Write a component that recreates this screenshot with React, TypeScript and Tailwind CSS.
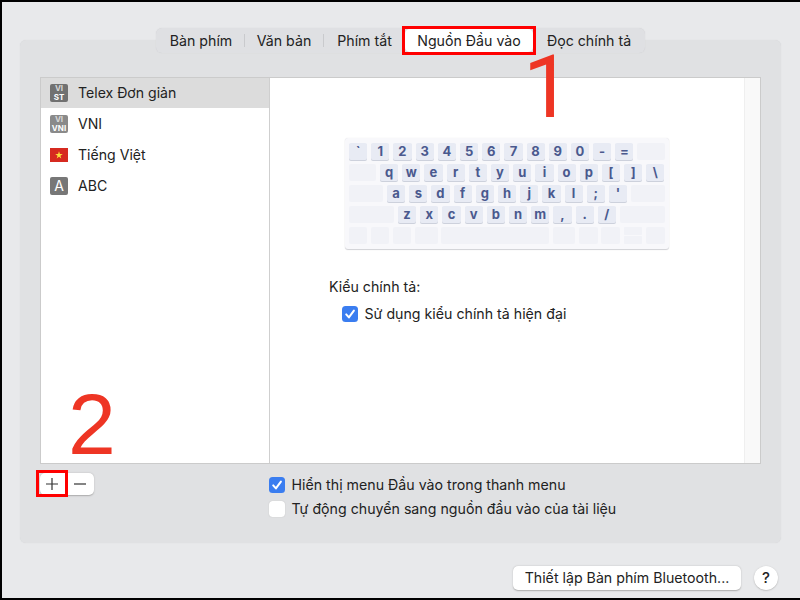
const row1 = ["`", "1", "2", "3", "4", "5", "6", "7", "8", "9", "0", "-", "="];
const row2 = ["q", "w", "e", "r", "t", "y", "u", "i", "o", "p", "[", "]", "\\"];
const row3 = ["a", "s", "d", "f", "g", "h", "j", "k", "l", ";", "'"];
const row4 = ["z", "x", "c", "v", "b", "n", "m", ",", ".", "/"];

function Key({ label }: { label: string }) {
  return (
    <div className="flex h-[17.5px] w-[18.2px] shrink-0 items-center justify-center rounded-[2px] bg-[#e8ebf4] text-[13px] font-bold leading-none text-[#4a598e] shadow-[0_1px_0_#cdd1dc]">
      {label}
    </div>
  );
}

function Blank({ className }: { className: string }) {
  return <div className={`h-[17.5px] rounded-[2px] bg-[#f1f2f7] ${className}`} />;
}

function Keyboard() {
  return (
    <div className="ml-[75px] mt-[60px] flex h-[111px] w-[324px] flex-col gap-[3.6px] rounded-[3px] bg-[#f8f8fb] px-[4px] pt-[4.5px] shadow-[0_1px_1px_#d0d1d5,0_0_1px_#d9dade]">
      <div className="flex gap-[4px]">
        {row1.map((k) => (
          <Key key={k} label={k} />
        ))}
        <Blank className="flex-1" />
      </div>
      <div className="flex gap-[4px]">
        <Blank className="w-[27px]" />
        {row2.map((k) => (
          <Key key={k} label={k} />
        ))}
      </div>
      <div className="flex gap-[4px]">
        <Blank className="w-[34px]" />
        {row3.map((k) => (
          <Key key={k} label={k} />
        ))}
        <Blank className="flex-1" />
      </div>
      <div className="flex gap-[4px]">
        <Blank className="w-[45px]" />
        {row4.map((k) => (
          <Key key={k} label={k} />
        ))}
        <Blank className="flex-1" />
      </div>
      <div className="flex gap-[3.5px]">
        <Blank className="w-[18px]" />
        <Blank className="w-[18.5px]" />
        <Blank className="w-[18.5px]" />
        <Blank className="w-[23px]" />
        <Blank className="w-[108px]" />
        <Blank className="w-[22.5px]" />
        <Blank className="w-[19px]" />
        <Blank className="w-[19px]" />
        <div className="flex w-[18.5px] flex-col gap-[1px]">
          <div className="h-[8px] rounded-[1px] bg-[#f1f2f7]" />
          <div className="h-[8px] rounded-[1px] bg-[#f1f2f7]" />
        </div>
        <Blank className="flex-1" />
      </div>
    </div>
  );
}

function Checkbox({ checked }: { checked?: boolean }) {
  if (!checked) {
    return <div className="h-[15.5px] w-[15.5px] shrink-0 rounded-[3.5px] bg-white shadow-[0_0_1px_#a9a9a9]" />;
  }
  return (
    <div className="flex h-[15.5px] w-[15.5px] shrink-0 items-center justify-center rounded-[3.5px] bg-[#3a7df0]">
      <svg width="12" height="12" viewBox="0 0 12 12" fill="none">
        <path d="M2.2 6.4 4.9 9.4 9.9 2.6" stroke="white" strokeWidth="2" strokeLinecap="round" strokeLinejoin="round" />
      </svg>
    </div>
  );
}

function Badge({ top, bottom, tone }: { top: string; bottom: string; tone: string }) {
  return (
    <div className={`flex h-[18px] w-[18px] flex-col items-center justify-center overflow-hidden rounded-[2px] text-[8px] font-bold leading-[9px] text-white ${tone}`}>
      <span className="text-[#d8d8d8]">{top}</span>
      <span>{bottom}</span>
    </div>
  );
}

function ListRow({ icon, label, selected }: { icon: React.ReactNode; label: string; selected?: boolean }) {
  return (
    <div className={`flex items-center pl-[9px] ${selected ? "h-[30px] bg-[#dcdcdc]" : "h-[31px]"}`}>
      <div className="flex w-[28px] shrink-0 items-center">{icon}</div>
      <span className="text-[14.1px] text-[#222]">{label}</span>
    </div>
  );
}

function Flag() {
  return (
    <svg width="18" height="14" viewBox="0 0 18 14">
      <rect width="18" height="14" fill="#d62a20" />
      <path d="M9 3.2 9.9 6 12.8 6 10.4 7.7 11.3 10.5 9 8.8 6.7 10.5 7.6 7.7 5.2 6 8.1 6Z" fill="#fbe03c" />
    </svg>
  );
}

const tabs = [
  { label: "Bàn phím", width: "w-[89px] pl-[2px]", divider: true },
  { label: "Văn bản", width: "w-[79px]", divider: true },
  { label: "Phím tắt", width: "w-[81px]", divider: false },
];

export default function App() {
  return (
    <div
      className="relative h-[600px] w-[800px] overflow-hidden border-b-2 border-l-2 border-t-2 border-black bg-[#e8e9eb] pl-[18px] pr-[19px] pt-[26px] text-[#222]"
      style={{ fontFamily: "Inter, 'Liberation Sans', sans-serif" }}
    >
      <div className="relative z-10 -mb-[13px] ml-[136px] flex h-[25px] w-[489px] items-center rounded-[6px] bg-[#dfe0e3] text-[14.2px] shadow-[0_0_1px_#c8c9cc]">
        {tabs.map((t) => (
          <div key={t.label} className={`flex h-[13px] items-center justify-center ${t.width} ${t.divider ? "border-r border-[#c9cacd]" : ""}`}>
            {t.label}
          </div>
        ))}
        <div className="flex h-[23px] w-[128px] items-center justify-center rounded-[5px] bg-white">Nguồn Đầu vào</div>
        <div className="flex flex-1 items-center justify-center">Đọc chính tả</div>
      </div>

      <div className="h-[503px] rounded-[6px] bg-[#e0e1e3] px-[20px] pt-[37px] shadow-[0_0_1px_#cfd0d2]">
        <div className="flex h-[387px] w-[721px] border border-[#cbcbcb] bg-white">
          <div className="w-[229px] border-r border-[#cfcfcf]">
            <ListRow selected label="Telex Đơn giản" icon={<Badge top="VI" bottom="ST" tone="bg-[#717171]" />} />
            <ListRow label="VNI" icon={<Badge top="VI" bottom="VNI" tone="bg-[#8a8a8a]" />} />
            <ListRow label="Tiếng Việt" icon={<Flag />} />
            <ListRow
              label="ABC"
              icon={
                <div className="flex h-[18px] w-[18px] items-center justify-center rounded-[2px] bg-[#777] text-[14px] leading-none text-white">
                  A
                </div>
              }
            />
          </div>
          <div className="flex-1">
            <Keyboard />
            <div className="ml-[59px] mt-[28px] h-[20px] text-[14.2px] leading-[20px]">Kiểu chính tả:</div>
            <div className="ml-[72px] mt-[7px] flex h-[20px] items-center gap-[7px] text-[14.2px]">
              <Checkbox checked />
              <span>Sử dụng kiểu chính tả hiện đại</span>
            </div>
          </div>
          <div className="w-[16px] border-l border-[#efefef] bg-[#f9f9f9]" />
        </div>

        <div className="mt-[9px] flex">
          <div className="flex h-[22px] w-[54px] rounded-[5px] bg-white shadow-[0_0.5px_1.5px_#aaa]">
            <div className="flex w-[24px] items-center justify-center">
              <svg width="12" height="12" viewBox="0 0 12 12" stroke="#333" strokeWidth="1.2">
                <path d="M6 0V12M0 6H12" />
              </svg>
            </div>
            <div className="ml-auto flex w-[28px] items-center justify-center">
              <svg width="12" height="12" viewBox="0 0 12 12" stroke="#333" strokeWidth="1.2">
                <path d="M0 6H12" />
              </svg>
            </div>
          </div>
          <div className="ml-[175px] mt-[4px] flex flex-col gap-[8px] text-[14.2px]">
            <div className="flex h-[16px] items-center gap-[7px]">
              <Checkbox checked />
              <span>Hiển thị menu Đầu vào trong thanh menu</span>
            </div>
            <div className="flex h-[16px] items-center gap-[7px]">
              <Checkbox />
              <span>Tự động chuyển sang nguồn đầu vào của tài liệu</span>
            </div>
          </div>
        </div>
      </div>

      <div className="mt-[23px] flex items-center justify-end gap-[13px] pr-[3px]">
        <div className="flex h-[23.5px] w-[228px] items-center justify-center rounded-[5px] bg-white text-[14.2px] shadow-[0_0.5px_1.5px_#aaa]">
          Thiết lập Bàn phím Bluetooth...
        </div>
        <div className="flex h-[24px] w-[24px] items-center justify-center rounded-full bg-white text-[15px] font-medium shadow-[0_0.5px_1.5px_#aaa]">
          ?
        </div>
      </div>

      {/* annotations drawn over the screenshot */}
      <div className="absolute left-[400px] top-[24px] z-20 h-[29px] w-[134px] border-[3px] border-[#ff0000]" />
      <div className="absolute left-[34px] top-[468px] z-20 h-[27px] w-[32px] border-[3px] border-[#ff0000]" />
      <div
        className="absolute left-[521px] top-[54px] z-20 text-[87px] leading-[62px] text-[#ee3524]"
        style={{ fontFamily: "Roboto, sans-serif" }}
      >
        1
      </div>
      <div
        className="absolute left-[66px] top-[379px] z-20 text-[86px] leading-[86px] text-[#ee3524]"
        style={{ fontFamily: "'Liberation Sans', sans-serif" }}
      >
        2
      </div>
    </div>
  );
}
